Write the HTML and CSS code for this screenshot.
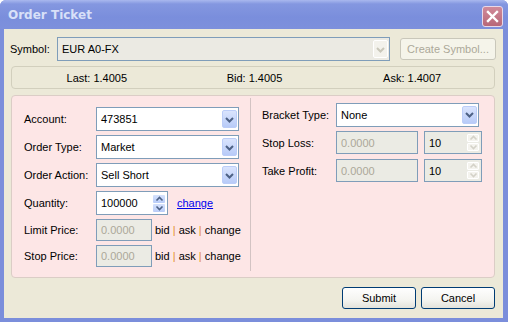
FILE: index.html
```html
<!DOCTYPE html>
<html lang="en">
<head>
    <meta charset="UTF-8">
    <title>Order Ticket</title>
    <link rel="stylesheet" href="styles.css">
</head>
<body>
    <div class="window">
        <div class="titlebar">
            <span class="title">Order Ticket</span>
            <span class="close">
                <svg width="13" height="13" viewBox="0 0 13 13"><path d="M2 2L11 11M11 2L2 11" stroke="#fff" stroke-width="2.4" stroke-linecap="square"/></svg>
            </span>
        </div>
        <div class="frame">
            <div class="symbol-row">
                <span class="symbol-label">Symbol:</span>
                <div class="combo combo-off symbol-combo">
                    <span class="value">EUR A0-FX</span>
                    <span class="drop"><svg width="13" height="15" viewBox="0 0 13 15"><path d="M3 6L6.5 9.5L10 6" fill="none" stroke="#c9c7ba" stroke-width="2"/></svg></span>
                </div>
                <button class="btn btn-off create-btn">Create Symbol...</button>
            </div>

            <div class="quotes">
                <span>Last: 1.4005</span>
                <span>Bid: 1.4005</span>
                <span>Ask: 1.4007</span>
            </div>

            <div class="panel">
                <div class="col col-left">
                    <div class="row">
                        <span class="label">Account:</span>
                        <div class="combo wide">
                            <span class="value">473851</span>
                            <span class="drop"><svg width="13" height="15" viewBox="0 0 13 15"><path d="M3 6L6.5 9.5L10 6" fill="none" stroke="#4d6185" stroke-width="2"/></svg></span>
                        </div>
                    </div>
                    <div class="row">
                        <span class="label">Order Type:</span>
                        <div class="combo wide">
                            <span class="value">Market</span>
                            <span class="drop"><svg width="13" height="15" viewBox="0 0 13 15"><path d="M3 6L6.5 9.5L10 6" fill="none" stroke="#4d6185" stroke-width="2"/></svg></span>
                        </div>
                    </div>
                    <div class="row">
                        <span class="label">Order Action:</span>
                        <div class="combo wide">
                            <span class="value">Sell Short</span>
                            <span class="drop"><svg width="13" height="15" viewBox="0 0 13 15"><path d="M3 6L6.5 9.5L10 6" fill="none" stroke="#4d6185" stroke-width="2"/></svg></span>
                        </div>
                    </div>
                    <div class="row">
                        <span class="label">Quantity:</span>
                        <div class="spin qty">
                            <span class="value">100000</span>
                            <span class="spin-btns">
                                <span class="sb"><svg width="9" height="6" viewBox="0 0 9 6"><path d="M1.5 4.5L4.5 1.5L7.5 4.5" fill="none" stroke="#4d6185" stroke-width="1.6"/></svg></span>
                                <span class="sb"><svg width="9" height="6" viewBox="0 0 9 6"><path d="M1.5 1.5L4.5 4.5L7.5 1.5" fill="none" stroke="#4d6185" stroke-width="1.6"/></svg></span>
                            </span>
                        </div>
                        <a class="link" href="#">change</a>
                    </div>
                    <div class="row row-small">
                        <span class="label">Limit Price:</span>
                        <div class="input input-off price">0.0000</div>
                        <span class="picks">bid <i>|</i> ask <i>|</i> change</span>
                    </div>
                    <div class="row row-small">
                        <span class="label">Stop Price:</span>
                        <div class="input input-off price">0.0000</div>
                        <span class="picks">bid <i>|</i> ask <i>|</i> change</span>
                    </div>
                </div>

                <div class="divider"></div>

                <div class="col col-right">
                    <div class="row">
                        <span class="label label-r">Bracket Type:</span>
                        <div class="combo wide">
                            <span class="value">None</span>
                            <span class="drop"><svg width="13" height="15" viewBox="0 0 13 15"><path d="M3 6L6.5 9.5L10 6" fill="none" stroke="#4d6185" stroke-width="2"/></svg></span>
                        </div>
                    </div>
                    <div class="row">
                        <span class="label label-r">Stop Loss:</span>
                        <div class="input input-off bracket-price">0.0000</div>
                        <div class="spin spin-off ticks">
                            <span class="value">10</span>
                            <span class="spin-btns">
                                <span class="sb"><svg width="9" height="6" viewBox="0 0 9 6"><path d="M1.5 4.5L4.5 1.5L7.5 4.5" fill="none" stroke="#d4d2c8" stroke-width="1.6"/></svg></span>
                                <span class="sb"><svg width="9" height="6" viewBox="0 0 9 6"><path d="M1.5 1.5L4.5 4.5L7.5 1.5" fill="none" stroke="#d4d2c8" stroke-width="1.6"/></svg></span>
                            </span>
                        </div>
                    </div>
                    <div class="row">
                        <span class="label label-r">Take Profit:</span>
                        <div class="input input-off bracket-price">0.0000</div>
                        <div class="spin spin-off ticks">
                            <span class="value">10</span>
                            <span class="spin-btns">
                                <span class="sb"><svg width="9" height="6" viewBox="0 0 9 6"><path d="M1.5 4.5L4.5 1.5L7.5 4.5" fill="none" stroke="#d4d2c8" stroke-width="1.6"/></svg></span>
                                <span class="sb"><svg width="9" height="6" viewBox="0 0 9 6"><path d="M1.5 1.5L4.5 4.5L7.5 1.5" fill="none" stroke="#d4d2c8" stroke-width="1.6"/></svg></span>
                            </span>
                        </div>
                    </div>
                </div>
            </div>

            <div class="actions">
                <button class="btn">Submit</button>
                <button class="btn">Cancel</button>
            </div>
        </div>
    </div>
</body>
</html>
```

FILE: styles.css
```css
body{
    margin: 0;
    padding: 0;
    background: #fff;
    font-family: "Liberation Sans", Arial, sans-serif;
    font-size: 11px;
    color: #000;
}
.window{
    width: 508px;
    height: 322px;
    display: flex;
    flex-direction: column;
    background: #7b8edb;
    border-radius: 6px 6px 0 0;
    overflow: hidden;
}
.titlebar{
    height: 29px;
    flex: none;
    display: flex;
    align-items: center;
    justify-content: space-between;
    padding: 0 5px 0 8px;
    background: linear-gradient(#a9b8ee, #8497e0 4px, #7a8edc 60%, #7d90dc);
}
.title{
    font-family: "DejaVu Sans", sans-serif;
    font-weight: bold;
    font-size: 12px;
    color: #d8e0f8;
    margin-top: 1px;
}
.close{
    width: 19px;
    height: 19px;
    margin-top: 3px;
    display: flex;
    align-items: center;
    justify-content: center;
    background: linear-gradient(#d08a9a, #b86878);
    border: 1px solid #e8d8e8;
    border-radius: 3px;
}
.frame{
    flex: 1;
    margin: 0 5px 4px 4px;
    background: #ece9d8;
    display: flex;
    flex-direction: column;
}

/* symbol */
.symbol-row{
    display: flex;
    align-items: center;
    margin-top: 8px;
    padding-left: 6px;
    height: 24px;
}
.symbol-label{
    width: 47px;
}
.symbol-combo{
    width: 333px;
}
.create-btn{
    margin-left: 10px;
    width: 96px;
}

/* combo / inputs */
.combo, .input, .spin{
    box-sizing: border-box;
    height: 24px;
    border: 1px solid #7f9db9;
    background: #fff;
    display: flex;
    align-items: center;
}
.combo .value, .spin .value{
    flex: 1;
    padding-left: 4px;
}
.combo .drop{
    width: 15px;
    height: 18px;
    margin-right: 1px;
    box-sizing: border-box;
    border: 1px solid #bccdf8;
    border-radius: 2px;
    background: linear-gradient(#dae4fd, #b8cbf8);
    display: flex;
    align-items: center;
    justify-content: center;
}
.combo-off{
    background: #ebeae3;
}
.combo-off .drop{
    background: #f3f2ec;
    border-color: #fff;
}
.wide{
    width: 143px;
}
.input{
    padding-left: 4px;
}
.input-off{
    background: #ebebe4;
    color: #aca899;
}
.price{
    width: 56px;
    height: 22px;
}
.bracket-price{
    width: 82px;
    height: 23px;
}
.spin-btns{
    display: flex;
    flex-direction: column;
    margin-right: 2px;
    gap: 1px;
}
.sb{
    width: 12px;
    height: 8px;
    box-sizing: border-box;
    border-radius: 1px;
    background: linear-gradient(#d5e1fc, #b9ccf8);
    display: flex;
    align-items: center;
    justify-content: center;
}
.spin-off{
    background: #ebebe4;
}
.spin-off .sb{
    background: #f4f3ee;
    border: 1px solid #fff;
}
.qty{
    width: 72px;
}
.ticks{
    width: 58px;
    height: 23px;
    margin-left: 6px;
}

/* quotes */
.quotes{
    box-sizing: border-box;
    height: 23px;
    margin: 5px 8px 0 7px;
    padding: 0 3px 0 6px;
    border: 1px solid #d2cfbd;
    border-radius: 4px;
    display: grid;
    grid-template-columns: 1fr 1fr 1fr;
    align-items: center;
    text-align: center;
}

/* panel */
.panel{
    box-sizing: border-box;
    height: 183px;
    margin: 6px 8px 0 7px;
    background: #fde6e6;
    border: 1px solid #dbcdc6;
    border-radius: 4px;
    display: flex;
}
.col{
    display: flex;
    flex-direction: column;
}
.col-left{
    width: 238px;
    padding: 11px 0 0 12px;
    box-sizing: border-box;
    gap: 4px;
}
.col-right{
    flex: 1;
    padding: 7px 0 0 11px;
    gap: 5px;
}
.divider{
    width: 1px;
    margin: 2px 0 6px;
    background: #d3c3c3;
}
.row{
    display: flex;
    align-items: center;
    height: 24px;
}
.col-right .row{
    height: 23px;
}
.row-small{
    height: 22px;
}
.label{
    width: 72px;
    flex: none;
}
.label-r{
    width: 74px;
}
.link{
    margin-left: 9px;
    color: #0000ee;
    text-decoration: underline;
}
.picks{
    margin-left: 3px;
    white-space: nowrap;
}
.picks i{
    font-style: normal;
    color: #e3902e;
}

/* buttons */
.btn{
    box-sizing: border-box;
    height: 22px;
    font-family: "Liberation Sans", Arial, sans-serif;
    font-size: 11px;
    color: #000;
    border: 1px solid #003c74;
    border-radius: 3px;
    background: linear-gradient(#fefefe, #f4f4f0 60%, #e3e2da);
    padding: 0;
}
.btn-off{
    border-color: #c9c7ba;
    color: #aca899;
    background: #f5f4ea;
}
.actions{
    display: flex;
    justify-content: flex-end;
    gap: 5px;
    margin: 9px 8px 0 0;
}
.actions .btn{
    width: 74px;
}
```
